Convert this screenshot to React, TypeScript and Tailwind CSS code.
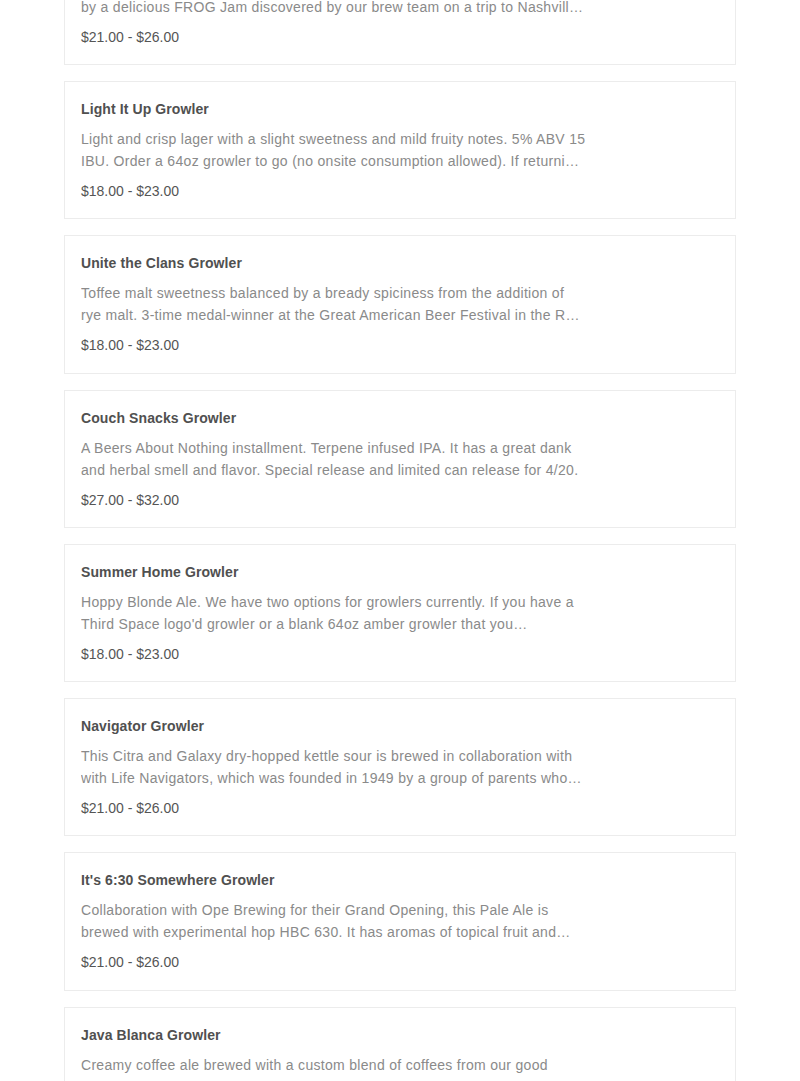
import React from 'react';

interface Item {
  name: string;
  description: string;
  price: string;
}

const items: Item[] = [
  {
    name: 'FROG Jam Growler',
    description:
      'Fruited sour ale brewed with figs, raspberries, oranges and ginger. Inspired\nby a delicious FROG Jam discovered by our brew team on a trip to Nashville. Order a 64oz growler to go.',
    price: '$21.00 - $26.00',
  },
  {
    name: 'Light It Up Growler',
    description:
      'Light and crisp lager with a slight sweetness and mild fruity notes. 5% ABV 15 IBU. Order a 64oz growler to go (no onsite consumption allowed). If returning a growler, please bring it clean.',
    price: '$18.00 - $23.00',
  },
  {
    name: 'Unite the Clans Growler',
    description:
      'Toffee malt sweetness balanced by a bready spiciness from the addition of rye malt. 3-time medal-winner at the Great American Beer Festival in the Rye Beer category.',
    price: '$18.00 - $23.00',
  },
  {
    name: 'Couch Snacks Growler',
    description:
      'A Beers About Nothing installment. Terpene infused IPA. It has a great dank and herbal smell and flavor. Special release and limited can release for 4/20.',
    price: '$27.00 - $32.00',
  },
  {
    name: 'Summer Home Growler',
    description:
      "Hoppy Blonde Ale. We have two options for growlers currently. If you have a Third Space logo'd growler or a blank 64oz amber growler that you\nwould like to have filled, choose refill.",
    price: '$18.00 - $23.00',
  },
  {
    name: 'Navigator Growler',
    description:
      'This Citra and Galaxy dry-hopped kettle sour is brewed in collaboration with with Life Navigators, which was founded in 1949 by a group of parents who wanted more for their children.',
    price: '$21.00 - $26.00',
  },
  {
    name: "It's 6:30 Somewhere Growler",
    description:
      'Collaboration with Ope Brewing for their Grand Opening, this Pale Ale is brewed with experimental hop HBC 630. It has aromas of topical fruit and citrus with a soft finish.',
    price: '$21.00 - $26.00',
  },
  {
    name: 'Java Blanca Growler',
    description:
      'Creamy coffee ale brewed with a custom blend of coffees from our good friends at Stone Creek Coffee. Notes of chocolate, caramel and vanilla.',
    price: '$21.00 - $26.00',
  },
];

const ItemCard: React.FC<{ item: Item }> = ({ item }) => (
  <div className="border border-[#ececec] bg-white px-4 pt-[17px] pb-[17.3px]">
    <div className="text-[14px] font-bold leading-5 tracking-[0.1px] text-[#505050]">{item.name}</div>
    <div className="mt-[9px] max-w-[505px] whitespace-pre-line text-[14px] leading-[22px] tracking-[0.3px] text-[#8a8a8a] line-clamp-2">
      {item.description}
    </div>
    <div className="mt-[9px] text-[14px] leading-5 text-[#555555]">{item.price}</div>
  </div>
);

export default function App() {
  return (
    <div
      className="min-h-screen overflow-hidden bg-white"
      style={{ fontFamily: '"Liberation Sans", Arial, sans-serif' }}
    >
      <div className="mx-16 -mt-[73.3px] flex flex-col gap-4">
        {items.map((item) => (
          <ItemCard key={item.name} item={item} />
        ))}
      </div>
    </div>
  );
}
